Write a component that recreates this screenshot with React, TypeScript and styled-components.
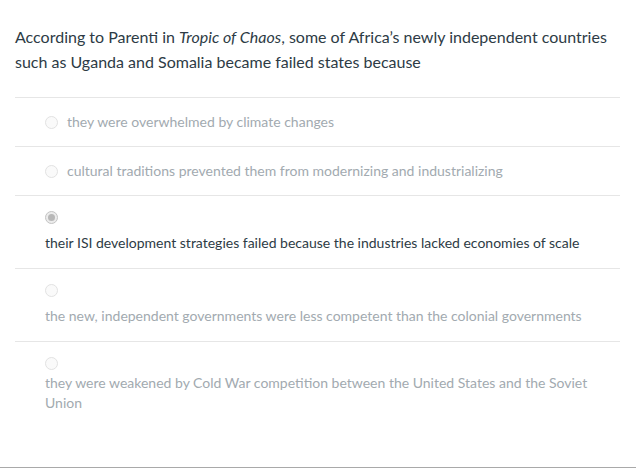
import { createGlobalStyle } from "styled-components";
import styled from "styled-components";

const GlobalStyle = createGlobalStyle`
  html, body {
    margin: 0;
    padding: 0;
    background: #ffffff;
  }
  body {
    font-family: Lato, "Liberation Sans", sans-serif;
  }
`;

const QuizRoot = styled.div`
  width: 636px;
  height: 476px;
  box-sizing: border-box;
  display: flex;
  flex-direction: column;
`;

const QuestionBlock = styled.div`
  flex: 1;
  padding: 24px 16px 0 15px;
`;

const QuestionText = styled.p`
  margin: 0 0 23px;
  font-size: 16px;
  line-height: 25px;
  color: #2d3b45;
`;

const AnswerList = styled.div`
  display: flex;
  flex-direction: column;
`;

const AnswerRow = styled.label<{ $stacked?: boolean; $gap?: number }>`
  display: flex;
  flex-direction: ${(p) => (p.$stacked ? "column" : "row")};
  align-items: ${(p) => (p.$stacked ? "flex-start" : "center")};
  gap: ${(p) => (p.$stacked ? `${p.$gap ?? 9}px` : "9px")};
  border-top: 1px solid #e6e6e6;
  padding: ${(p) => (p.$stacked ? "15px 0 15px 30px" : "14px 0 14px 30px")};
  cursor: default;
`;

const Radio = styled.span<{ $checked?: boolean }>`
  width: 13px;
  height: 13px;
  box-sizing: border-box;
  border-radius: 50%;
  border: 1px solid ${(p) => (p.$checked ? "#c4c4c4" : "#e2e2e2")};
  background: ${(p) => (p.$checked ? "#ececec" : "#fafafa")};
  display: flex;
  align-items: center;
  justify-content: center;
  flex-shrink: 0;
  &::after {
    content: "";
    display: ${(p) => (p.$checked ? "block" : "none")};
    width: 7px;
    height: 7px;
    border-radius: 50%;
    background: #b8b8b8;
  }
`;

const AnswerText = styled.span<{ $selected?: boolean }>`
  font-size: 14px;
  line-height: 20px;
  color: ${(p) => (p.$selected ? "#2d3b45" : "#a2aab0")};
`;

const BottomRule = styled.div`
  height: 1px;
  background: #a9a9a9;
  margin-bottom: 8px;
`;

type Answer = {
  text: string;
  stacked?: boolean;
  selected?: boolean;
  gap?: number;
};

const answers: Answer[] = [
  { text: "they were overwhelmed by climate changes" },
  {
    text: "cultural traditions prevented them from modernizing and industrializing",
  },
  {
    text: "their ISI development strategies failed because the industries lacked economies of scale",
    stacked: true,
    selected: true,
  },
  {
    text: "the new, independent governments were less competent than the colonial governments",
    stacked: true,
  },
  {
    text: "they were weakened by Cold War competition between the United States and the Soviet Union",
    stacked: true,
    gap: 3,
  },
];

export default function App() {
  return (
    <QuizRoot>
      <GlobalStyle />
      <QuestionBlock>
        <QuestionText>
          According to Parenti in <em>Tropic of Chaos</em>, some of Africa’s
          newly independent countries such as Uganda and Somalia became failed
          states because
        </QuestionText>
        <AnswerList>
          {answers.map((a) => (
            <AnswerRow key={a.text} $stacked={a.stacked} $gap={a.gap}>
              <Radio $checked={a.selected} />
              <AnswerText $selected={a.selected}>{a.text}</AnswerText>
            </AnswerRow>
          ))}
        </AnswerList>
      </QuestionBlock>
      <BottomRule />
    </QuizRoot>
  );
}
